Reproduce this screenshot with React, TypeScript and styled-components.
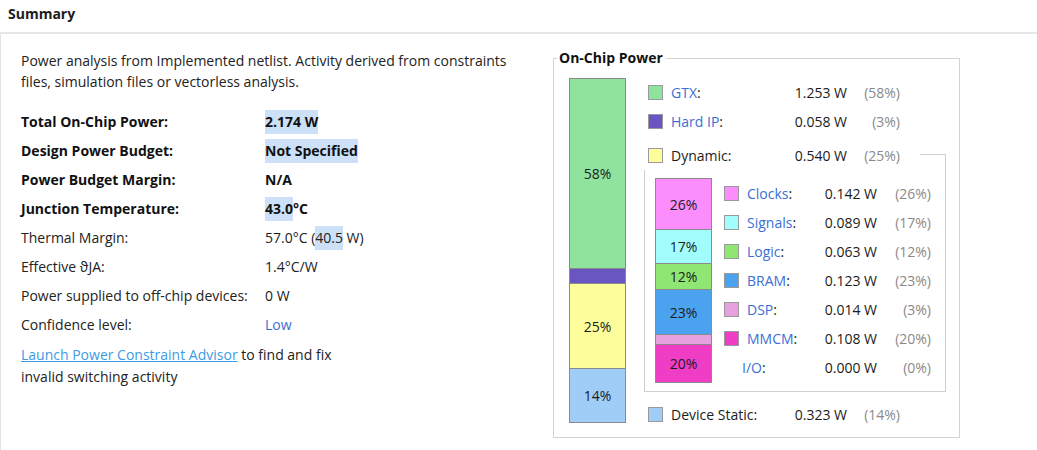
import React from "react";
import styled, { createGlobalStyle } from "styled-components";

const Global = createGlobalStyle`
  html, body { margin: 0; padding: 0; background: #fff; }
  body {
    font-family: "Open Sans", "Noto Sans", "Liberation Sans", sans-serif;
    font-size: 14px;
    color: #1c1c1c;
  }
`;

const Page = styled.div`
  width: 1037px;
  height: 450px;
  overflow: hidden;
  display: flex;
  flex-direction: column;
`;

const Header = styled.div`
  display: flex;
  align-items: center;
  padding-left: 8px;
  font-weight: 700;
  font-size: 14px;
  border-bottom: 2px solid #e6e6e6;
  box-sizing: border-box;
  height: 34px;
  padding-bottom: 5px;
`;

const Body = styled.div`
  flex: 1;
  display: flex;
  border-left: 1px solid #e3e3e3;
`;

const LeftPanel = styled.div`
  width: 532px;
  padding: 16px 0 0 20px;
  box-sizing: border-box;
`;

const Para = styled.p<{ $lh?: number }>`
  margin: 0;
  line-height: ${(p) => p.$lh ?? 21}px;
  color: #222;
`;

const InfoGrid = styled.div`
  margin-top: 15px;
  display: grid;
  grid-template-columns: 244px auto;
  grid-auto-rows: 29px;
  align-items: center;
`;

const Label = styled.div<{ $bold?: boolean }>`
  font-weight: ${(p) => (p.$bold ? 700 : 400)};
  color: ${(p) => (p.$bold ? "#111" : "#222")};
  white-space: nowrap;
`;

const Value = styled.div<{ $bold?: boolean; $blue?: boolean }>`
  font-weight: ${(p) => (p.$bold ? 700 : 400)};
  color: ${(p) => (p.$blue ? "#3b6fd4" : p.$bold ? "#111" : "#222")};
  white-space: nowrap;
`;

const Hl = styled.span`
  background: #cce0f7;
  padding: 2px 0 3px;
`;

const AdvisorPara = styled(Para)`
  margin-top: 5px;
`;

const Link = styled.a`
  color: #3d9be6;
  text-decoration: underline;
  cursor: pointer;
`;

const RightArea = styled.div`
  padding-top: 16px;
`;

const Fieldset = styled.fieldset`
  margin: 0 0 0 20px;
  width: 407px;
  height: 388px;
  box-sizing: border-box;
  border: 1px solid #d4d4d4;
  padding: 12px 0 0 15px;
  display: flex;
  gap: 22px;
`;

const Legend = styled.legend`
  font-weight: 700;
  font-size: 14px;
  padding: 0 3px 0 2px;
  margin-left: -12px;
  line-height: 16px;
  color: #111;
`;

const Bar = styled.div<{ $w: number }>`
  width: ${(p) => p.$w}px;
  display: flex;
  flex-direction: column;
  border: 1px solid #8a8a8a;
  box-sizing: border-box;
  align-self: flex-start;
`;

const Segment = styled.div<{ $c: string }>`
  background: ${(p) => p.$c};
  display: flex;
  align-items: center;
  justify-content: center;
  color: #1c1c1c;
  box-sizing: border-box;
  & + & {
    border-top: 1px solid #8a8a8a;
  }
`;

const LegendCol = styled.div`
  display: flex;
  flex-direction: column;
  width: 298px;
`;

const Row = styled.div<{ $cols: string }>`
  display: grid;
  grid-template-columns: ${(p) => p.$cols};
  align-items: center;
  height: 29px;
  white-space: nowrap;
`;

const Swatch = styled.div<{ $c?: string }>`
  width: 15px;
  height: 15px;
  box-sizing: border-box;
  background: ${(p) => p.$c ?? "transparent"};
  border: 1px solid ${(p) => (p.$c ? "#9a9a9a" : "transparent")};
`;

const ItemName = styled.div<{ $shift?: number }>`
  margin-left: ${(p) => p.$shift ?? 8}px;
`;

const Blue = styled.span`
  color: #3b6fd4;
`;

const Num = styled.div`
  text-align: right;
`;

const Pct = styled.div`
  text-align: right;
  color: #8a8a8a;
`;

const DynSection = styled.div`
  margin-top: 5px;
  display: flex;
  flex-direction: column;
`;

const DynHeader = styled.div`
  position: relative;
  z-index: 1;
  background: #fff;
  width: 272px;
  margin-left: -4px;
  padding-left: 4px;
`;

const DynBox = styled.div`
  margin-top: -16px;
  margin-left: -4px;
  height: 238px;
  box-sizing: border-box;
  border: 1px solid #d0d0d0;
  padding: 23px 0 0 10px;
  display: flex;
  gap: 12px;
`;

const SubCol = styled.div`
  display: flex;
  flex-direction: column;
  padding-top: 1px;
`;

const StaticRow = styled.div`
  margin-top: 8px;
`;

const MAIN_COLS = "15px 109px 75px 53px";
const SUB_COLS = "15px 81px 57px 54px";

const mainSegs = [
  { c: "#90e29f", h: 189, t: "58%" },
  { c: "#6b55c1", h: 15, t: "" },
  { c: "#fdfd9c", h: 85, t: "25%" },
  { c: "#a0cdf8", h: 54, t: "14%" },
];

const subSegs = [
  { c: "#fc8dfc", h: 50, t: "26%" },
  { c: "#a2fdfd", h: 34, t: "17%" },
  { c: "#90e672", h: 26, t: "12%" },
  { c: "#4ba2ef", h: 45, t: "23%" },
  { c: "#e6a1de", h: 10, t: "" },
  { c: "#ef3dc6", h: 38, t: "20%" },
];

const subItems: { c?: string; n: string; v: string; p: string; shift?: number }[] = [
  { c: "#fc8dfc", n: "Clocks", v: "0.142 W", p: "(26%)" },
  { c: "#a2fdfd", n: "Signals", v: "0.089 W", p: "(17%)" },
  { c: "#90e672", n: "Logic", v: "0.063 W", p: "(12%)" },
  { c: "#4ba2ef", n: "BRAM", v: "0.123 W", p: "(23%)" },
  { c: "#e6a1de", n: "DSP", v: "0.014 W", p: "(3%)" },
  { c: "#ef3dc6", n: "MMCM", v: "0.108 W", p: "(20%)" },
  { n: "I/O", v: "0.000 W", p: "(0%)", shift: 3 },
];

export default function App() {
  return (
    <Page>
      <Global />
      <Header>Summary</Header>
      <Body>
        <LeftPanel>
          <Para>
            Power analysis from Implemented netlist. Activity derived from constraints
            <br />
            files, simulation files or vectorless analysis.
          </Para>
          <InfoGrid>
            <Label $bold>Total On-Chip Power:</Label>
            <Value $bold>
              <Hl>2.174 W</Hl>
            </Value>
            <Label $bold>Design Power Budget:</Label>
            <Value $bold>
              <Hl>Not Specified</Hl>
            </Value>
            <Label $bold>Power Budget Margin:</Label>
            <Value $bold>N/A</Value>
            <Label $bold>Junction Temperature:</Label>
            <Value $bold>
              <Hl>43.0</Hl>°C
            </Value>
            <Label>Thermal Margin:</Label>
            <Value>
              57.0°C (<Hl>40.5</Hl> W)
            </Value>
            <Label>Effective ϑJA:</Label>
            <Value>1.4°C/W</Value>
            <Label>Power supplied to off-chip devices:</Label>
            <Value>0 W</Value>
            <Label>Confidence level:</Label>
            <Value $blue>Low</Value>
          </InfoGrid>
          <AdvisorPara $lh={22}>
            <Link>Launch Power Constraint Advisor</Link> to find and fix
            <br />
            invalid switching activity
          </AdvisorPara>
        </LeftPanel>
        <RightArea>
          <Fieldset>
            <Legend>On-Chip Power</Legend>
            <Bar $w={57}>
              {mainSegs.map((s, i) => (
                <Segment key={i} $c={s.c} style={{ height: s.h }}>
                  {s.t}
                </Segment>
              ))}
            </Bar>
            <LegendCol>
              <Row $cols={MAIN_COLS}>
                <Swatch $c="#90e29f" />
                <ItemName>
                  <Blue>GTX</Blue>:
                </ItemName>
                <Num>1.253 W</Num>
                <Pct>(58%)</Pct>
              </Row>
              <Row $cols={MAIN_COLS}>
                <Swatch $c="#6b55c1" />
                <ItemName>
                  <Blue>Hard IP</Blue>:
                </ItemName>
                <Num>0.058 W</Num>
                <Pct>(3%)</Pct>
              </Row>
              <DynSection>
                <DynHeader>
                  <Row $cols={MAIN_COLS}>
                    <Swatch $c="#fdfd9c" />
                    <ItemName>Dynamic:</ItemName>
                    <Num>0.540 W</Num>
                    <Pct>(25%)</Pct>
                  </Row>
                </DynHeader>
                <DynBox>
                  <Bar $w={57}>
                    {subSegs.map((s, i) => (
                      <Segment key={i} $c={s.c} style={{ height: s.h }}>
                        {s.t}
                      </Segment>
                    ))}
                  </Bar>
                  <SubCol>
                    {subItems.map((it) => (
                      <Row key={it.n} $cols={SUB_COLS}>
                        <Swatch $c={it.c} />
                        <ItemName $shift={it.shift}>
                          <Blue>{it.n}</Blue>:
                        </ItemName>
                        <Num>{it.v}</Num>
                        <Pct>{it.p}</Pct>
                      </Row>
                    ))}
                  </SubCol>
                </DynBox>
              </DynSection>
              <StaticRow>
                <Row $cols={MAIN_COLS}>
                  <Swatch $c="#a0cdf8" />
                  <ItemName>Device Static:</ItemName>
                  <Num>0.323 W</Num>
                  <Pct>(14%)</Pct>
                </Row>
              </StaticRow>
            </LegendCol>
          </Fieldset>
        </RightArea>
      </Body>
    </Page>
  );
}
